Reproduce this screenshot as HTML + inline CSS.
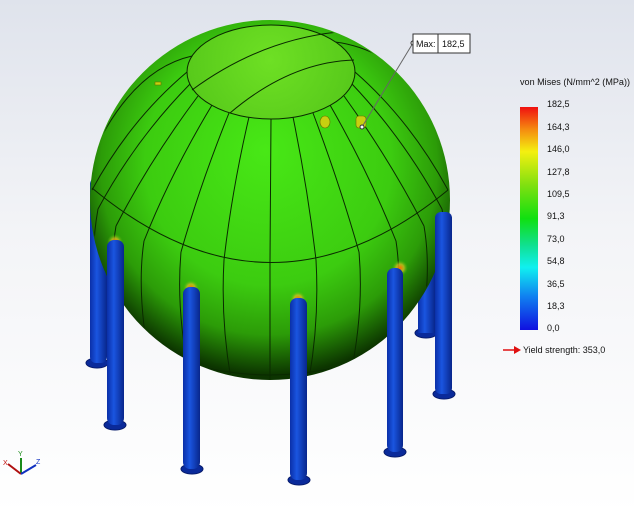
<!DOCTYPE html>
<html><head><meta charset="utf-8"><style>
body{margin:0;width:634px;height:514px;overflow:hidden;background:linear-gradient(#dfe3ec 0%,#f3f4f7 45%,#fff 100%);font-family:"Liberation Sans",sans-serif}
svg{position:absolute;left:0;top:0}
.t{font-size:9px;fill:#111}
</style></head><body>
<svg width="634" height="514" viewBox="0 0 634 514">
<defs>
<radialGradient id="sph" cx="270" cy="170" r="205" fx="265" fy="150" gradientUnits="userSpaceOnUse">
<stop offset="0" stop-color="#48e816"/><stop offset="0.6" stop-color="#3ccc10"/><stop offset="0.82" stop-color="#2c9c08"/><stop offset="1" stop-color="#0c3400"/>
</radialGradient>
<radialGradient id="cap" cx="270" cy="60" r="90" gradientUnits="userSpaceOnUse">
<stop offset="0" stop-color="#6ee024"/><stop offset="1" stop-color="#56c81a"/>
</radialGradient>
<linearGradient id="leg" x1="0" x2="1">
<stop offset="0" stop-color="#0a2fa8"/><stop offset="0.4" stop-color="#1a55e0"/><stop offset="1" stop-color="#08268c"/>
</linearGradient>
<radialGradient id="glow"><stop offset="0" stop-color="#ff6a00"/><stop offset="0.5" stop-color="#e0c020" stop-opacity="0.7"/><stop offset="1" stop-color="#40c010" stop-opacity="0"/></radialGradient>
<linearGradient id="bar" x1="0" y1="0" x2="0" y2="1">
<stop offset="0" stop-color="#f01010"/><stop offset="0.1" stop-color="#f58a10"/><stop offset="0.2" stop-color="#f4f010"/><stop offset="0.35" stop-color="#80e010"/><stop offset="0.5" stop-color="#10e010"/><stop offset="0.62" stop-color="#10e090"/><stop offset="0.72" stop-color="#10f0f0"/><stop offset="0.85" stop-color="#1080f0"/><stop offset="1" stop-color="#1010e0"/>
</linearGradient>
<clipPath id="cl"><circle cx="270" cy="200" r="179"/></clipPath>
</defs>
<g>
<ellipse cx="97" cy="363" rx="11" ry="5" fill="#0a2a9a" stroke="#061a6a"/>
<rect x="90" y="178" width="17" height="185" rx="6" fill="url(#leg)"/>
<ellipse cx="426" cy="333" rx="11" ry="5" fill="#0a2a9a" stroke="#061a6a"/>
<rect x="418" y="250" width="17" height="83" fill="url(#leg)"/>
</g>
<circle cx="270" cy="200" r="180" fill="url(#sph)"/>
<g fill="none" stroke="#0a2a00" stroke-width="1" clip-path="url(#cl)">
<path d="M92 188 Q270 336 448 190"/>
<path d="M110 330 Q270 420 430 330"/>
<path d="M355 72 Q410 120 448 190 M352 84 Q405 140 442 209 M344 96 Q390 160 424 226 M330 105 Q370 175 396 241 M313 113 Q340 185 359 252 M293 117 Q308 190 316 260 M271 119 L270 262 M249 117 Q232 190 224 260 M229 113 Q200 185 181 252 M212 105 Q170 175 144 241 M198 96 Q150 160 116 226 M190 84 Q135 140 98 209 M187 72 Q130 120 92 190"/>
<path d="M192 56 Q130 70 90 160 M335 42 Q400 50 440 120"/>
<path d="M442 209 Q455 280 430 360 M424 226 Q435 290 410 380 M396 241 Q405 300 385 390 M359 252 Q365 320 345 400 M316 260 Q320 330 305 400 M270 262 L270 400 M224 260 Q220 330 235 400 M181 252 Q175 320 195 400 M144 241 Q135 300 155 390 M116 226 Q105 290 130 380 M98 209 Q85 280 110 360"/>
</g>
<ellipse cx="271" cy="72" rx="84" ry="47" fill="url(#cap)" stroke="#0a2a00"/>
<g fill="none" stroke="#0a2a00" clip-path="url(#cl)"><path d="M192 90 Q260 40 338 32"/><path d="M230 113 Q290 62 354 60"/></g>
<g fill="#c8d010" stroke="#6a7000" stroke-width="0.6"><ellipse cx="325" cy="122" rx="5" ry="6"/><rect x="356" y="116" width="10" height="12" rx="3"/><rect x="155" y="82" width="6" height="3"/></g>
<g>
<circle cx="115" cy="242" r="8" fill="url(#glow)"/><circle cx="191" cy="288" r="8" fill="url(#glow)"/><circle cx="298" cy="299" r="8" fill="url(#glow)"/><circle cx="400" cy="268" r="8" fill="url(#glow)"/>
<ellipse cx="115" cy="425" rx="11" ry="5" fill="#0a2a9a" stroke="#061a6a"/>
<rect x="107" y="240" width="17" height="185" rx="7" fill="url(#leg)"/>
<ellipse cx="192" cy="469" rx="11" ry="5" fill="#0a2a9a" stroke="#061a6a"/>
<rect x="183" y="287" width="17" height="182" rx="7" fill="url(#leg)"/>
<ellipse cx="299" cy="480" rx="11" ry="5" fill="#0a2a9a" stroke="#061a6a"/>
<rect x="290" y="298" width="17" height="182" rx="7" fill="url(#leg)"/>
<ellipse cx="395" cy="452" rx="11" ry="5" fill="#0a2a9a" stroke="#061a6a"/>
<rect x="387" y="268" width="16" height="184" rx="7" fill="url(#leg)"/>
<ellipse cx="444" cy="394" rx="11" ry="5" fill="#0a2a9a" stroke="#061a6a"/>
<rect x="435" y="212" width="17" height="182" rx="6" fill="url(#leg)"/>
</g>
<line x1="413" y1="43" x2="362" y2="127" stroke="#666"/>
<circle cx="362" cy="127" r="2" fill="#fff" stroke="#333"/>
<circle cx="413" cy="43" r="2" fill="#fff" stroke="#333"/>
<rect x="413" y="34" width="57" height="19" fill="#fff" stroke="#333"/>
<line x1="438" y1="34" x2="438" y2="53" stroke="#333"/>
<text x="416" y="47" class="t">Max:</text><text x="442" y="47" class="t">182,5</text>
<text x="520" y="85" class="t" textLength="110" lengthAdjust="spacingAndGlyphs">von Mises (N/mm^2 (MPa))</text>
<rect x="520" y="107" width="18" height="223" fill="url(#bar)"/>
<text x="547" y="107" class="t">182,5</text><text x="547" y="130" class="t">164,3</text><text x="547" y="152" class="t">146,0</text><text x="547" y="175" class="t">127,8</text><text x="547" y="197" class="t">109,5</text><text x="547" y="219" class="t">91,3</text><text x="547" y="242" class="t">73,0</text><text x="547" y="264" class="t">54,8</text><text x="547" y="287" class="t">36,5</text><text x="547" y="309" class="t">18,3</text><text x="547" y="331" class="t">0,0</text>
<line x1="503" y1="350" x2="515" y2="350" stroke="#e01010" stroke-width="1.5"/><path d="M514 346 L521 350 L514 354Z" fill="#e01010"/>
<text x="523" y="353" class="t">Yield strength: 353,0</text>
<g stroke-width="2"><line x1="21" y1="474" x2="21" y2="458" stroke="#1a8a1a"/><line x1="21" y1="474" x2="8" y2="464" stroke="#b01010"/><line x1="21" y1="474" x2="36" y2="465" stroke="#1030c0"/></g>
<text x="18" y="456" font-size="7" fill="#1a8a1a">Y</text><text x="3" y="465" font-size="7" fill="#c01010">X</text><text x="36" y="464" font-size="7" fill="#1030c0">Z</text>
</svg>
</body></html>
